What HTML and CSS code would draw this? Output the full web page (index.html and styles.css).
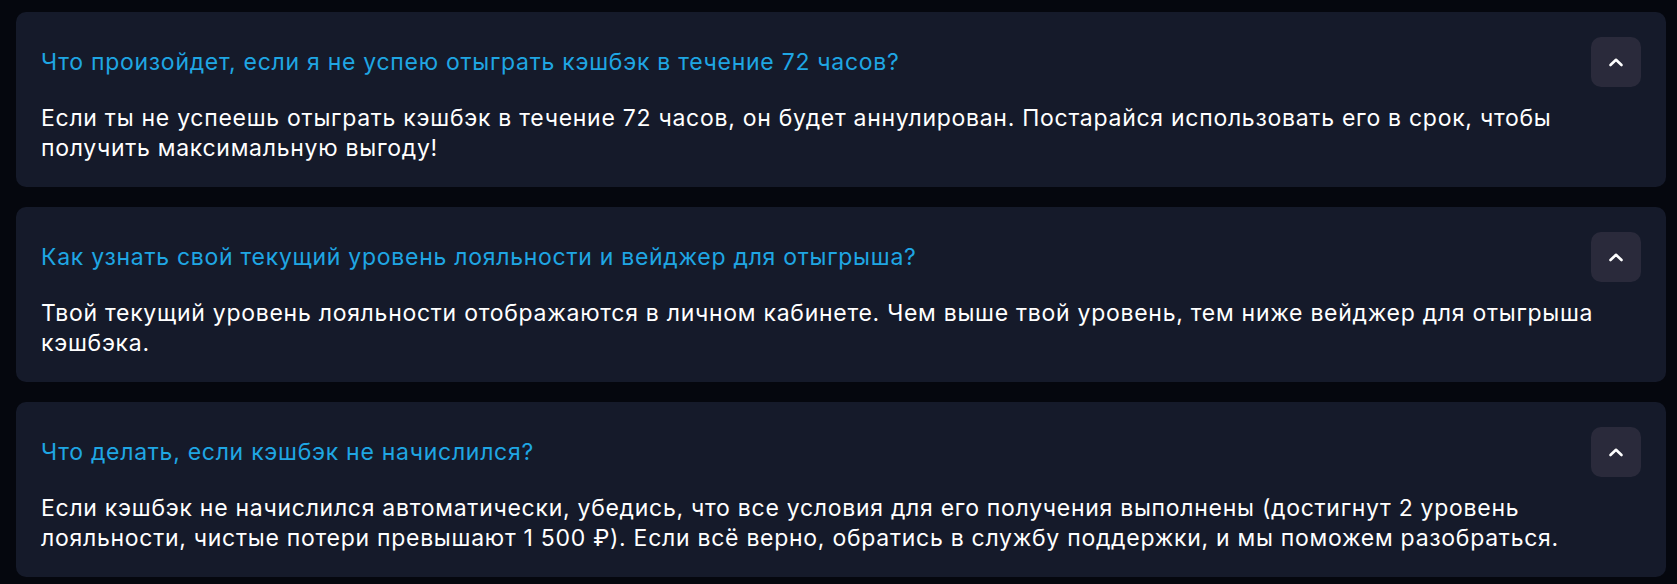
FILE: index.html
```html
<!DOCTYPE html>
<html lang="ru">
<head>
  <meta charset="UTF-8" />
  <meta name="viewport" content="width=device-width, initial-scale=1.0" />
  <title>Кэшбэк — вопросы</title>
  <link rel="stylesheet" href="styles.css">
</head>
<body>
  <div class="faq">
    <div class="faq-item">
      <div class="faq-head">
        <h3 class="faq-question">Что произойдет, если я не успею отыграть кэшбэк в течение 72 часов?</h3>
        <button class="faq-toggle" title="Свернуть">
          <svg width="16" height="10" viewBox="0 0 16 10"><path d="M2.5 8 L8 2.8 L13.5 8" /></svg>
        </button>
      </div>
      <p class="faq-answer">Если ты не успеешь отыграть кэшбэк в течение 72 часов, он будет аннулирован. Постарайся использовать его в срок, чтобы получить максимальную выгоду!</p>
    </div>
    <div class="faq-item">
      <div class="faq-head">
        <h3 class="faq-question">Как узнать свой текущий уровень лояльности и вейджер для отыгрыша?</h3>
        <button class="faq-toggle" title="Свернуть">
          <svg width="16" height="10" viewBox="0 0 16 10"><path d="M2.5 8 L8 2.8 L13.5 8" /></svg>
        </button>
      </div>
      <p class="faq-answer">Твой текущий уровень лояльности отображаются в личном кабинете. Чем выше твой уровень, тем ниже вейджер для отыгрыша кэшбэка.</p>
    </div>
    <div class="faq-item">
      <div class="faq-head">
        <h3 class="faq-question">Что делать, если кэшбэк не начислился?</h3>
        <button class="faq-toggle" title="Свернуть">
          <svg width="16" height="10" viewBox="0 0 16 10"><path d="M2.5 8 L8 2.8 L13.5 8" /></svg>
        </button>
      </div>
      <p class="faq-answer">Если кэшбэк не начислился автоматически, убедись, что все условия для его получения выполнены (достигнут 2 уровень лояльности, чистые потери превышают 1&nbsp;500&nbsp;₽). Если всё верно, обратись в службу поддержки, и мы поможем разобраться.</p>
    </div>
  </div>
</body>
</html>
```

FILE: styles.css
```css
body {
  background: #05070e;
  margin: 0;
  padding: 0;
  font-family: Inter, Roboto, sans-serif;
  color: #ffffff;
  letter-spacing: 0.72px;
}
.faq {
  display: flex;
  flex-direction: column;
  gap: 20px;
  padding: 12px 11px 0 16px;
}
.faq-item {
  background: #151a2a;
  border-radius: 10px;
  padding: 25px 25px 24px 25px;
}
.faq-head {
  display: flex;
  align-items: center;
  justify-content: space-between;
  height: 50px;
}
.faq-question {
  margin: 0;
  font-size: 23px;
  font-weight: normal;
  color: #1fa6e3;
}
.faq-toggle {
  width: 50px;
  height: 50px;
  border: none;
  border-radius: 10px;
  background: #2a2a3b;
  display: flex;
  align-items: center;
  justify-content: center;
  cursor: pointer;
  padding: 0;
}
.faq-toggle path {
  fill: none;
  stroke: #ffffff;
  stroke-width: 2.6;
  stroke-linecap: round;
  stroke-linejoin: round;
}
.faq-answer {
  margin: 16px 0 0 0;
  font-size: 23px;
  line-height: 30px;
}
```
